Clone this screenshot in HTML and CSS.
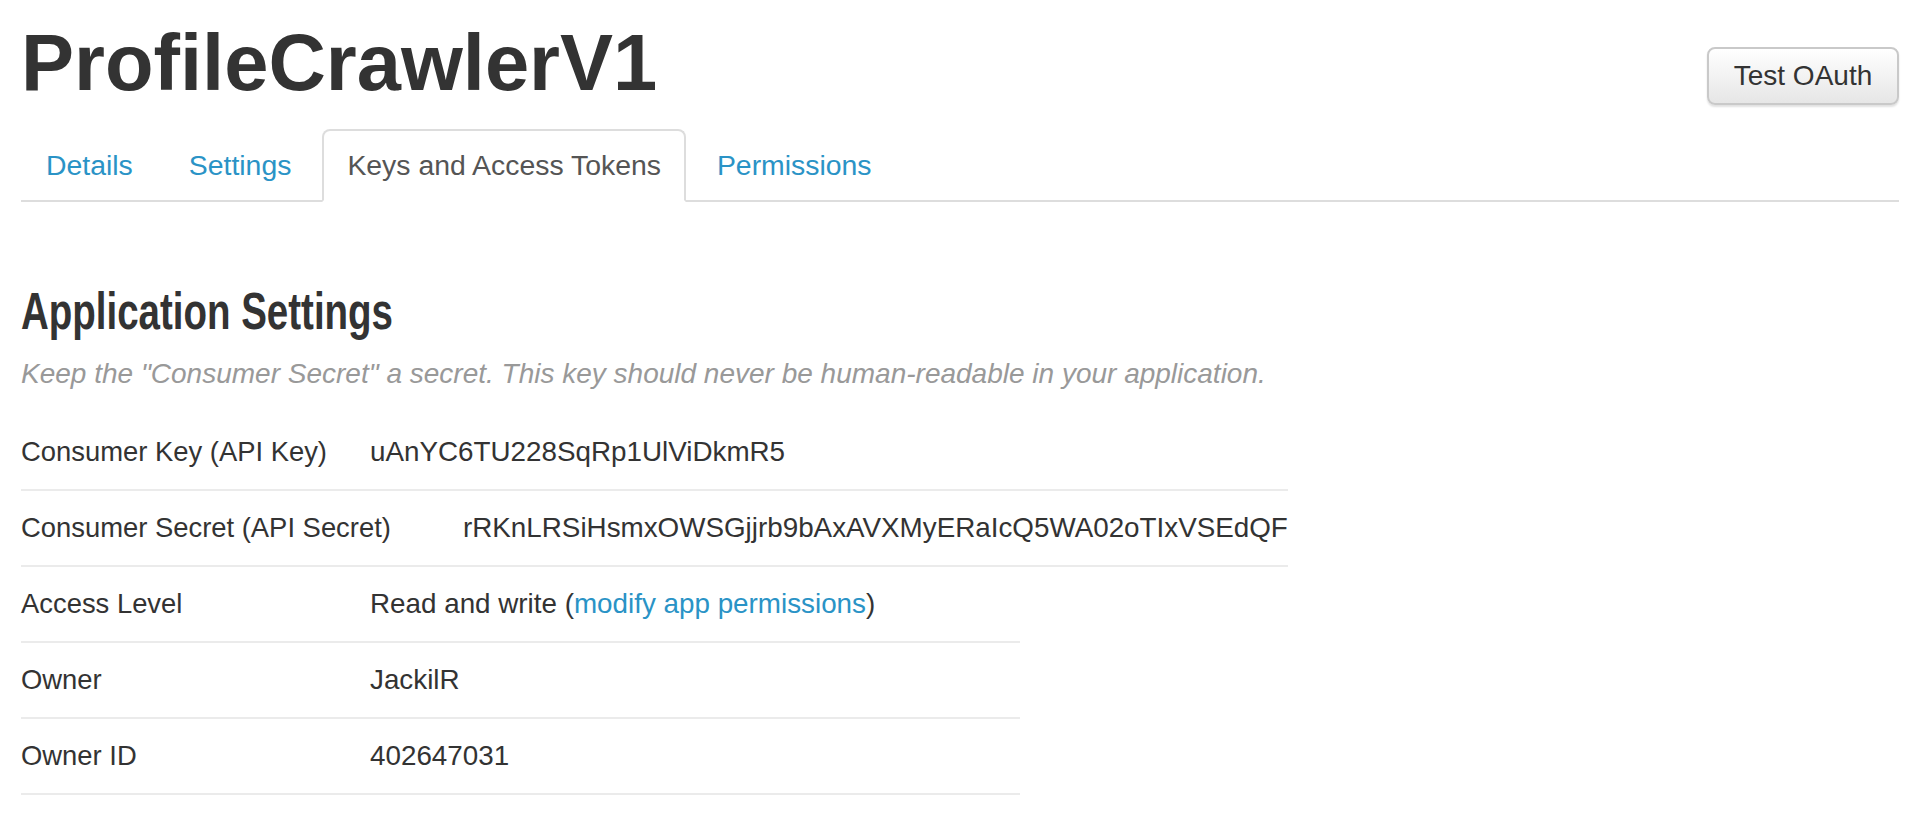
FILE: index.html
```html
<!DOCTYPE html>
<html lang="en">
<head>
<meta charset="utf-8">
<title>ProfileCrawlerV1</title>
<link rel="stylesheet" href="styles.css">
</head>
<body>
<div class="page">
  <header class="app-header">
    <h1 class="app-title">ProfileCrawlerV1</h1>
    <button class="btn" type="button">Test OAuth</button>
  </header>

  <ul class="tabs">
    <li class="tab"><a class="tab-link" href="#">Details</a></li>
    <li class="tab"><a class="tab-link" href="#">Settings</a></li>
    <li class="tab tab-active"><a class="tab-link" href="#">Keys and Access Tokens</a></li>
    <li class="tab"><a class="tab-link" href="#">Permissions</a></li>
  </ul>

  <section class="settings">
    <h2 class="section-title"><span class="section-title-text">Application Settings</span></h2>
    <p class="hint">Keep the "Consumer Secret" a secret. This key should never be human-readable in your application.</p>

    <div class="rows rows-keys">
      <div class="row row-key">
        <span class="row-label">Consumer Key (API Key)</span>
        <span class="row-value">uAnYC6TU228SqRp1UlViDkmR5</span>
      </div>
      <div class="row row-secret">
        <span class="row-label">Consumer Secret (API Secret)</span>
        <span class="row-value">rRKnLRSiHsmxOWSGjjrb9bAxAVXMyERaIcQ5WA02oTIxVSEdQF</span>
      </div>
    </div>

    <div class="rows rows-info">
      <div class="row">
        <span class="row-label">Access Level</span>
        <span class="row-value">Read and write (<a class="link" href="#">modify app permissions</a>)</span>
      </div>
      <div class="row">
        <span class="row-label">Owner</span>
        <span class="row-value">JackilR</span>
      </div>
      <div class="row">
        <span class="row-label">Owner ID</span>
        <span class="row-value">402647031</span>
      </div>
    </div>
  </section>
</div>
</body>
</html>
```

FILE: styles.css
```css
html, body {
  margin: 0;
  padding: 0;
  background: #ffffff;
}

body {
  font-family: "Liberation Sans", Arial, Helvetica, sans-serif;
  color: #333333;
  font-size: 28px;
}

.page {
  padding: 17px 21px 0 21px;
}

.app-header {
  display: flex;
  justify-content: space-between;
  align-items: flex-start;
}

.app-title {
  margin: 0;
  font-family: "Liberation Sans", Arial, sans-serif;
  font-weight: 700;
  font-size: 79.5px;
  line-height: 91px;
  color: #333333;
}

.btn {
  margin-top: 30px;
  width: 192px;
  height: 58px;
  padding: 0;
  font-family: "Liberation Sans", Arial, sans-serif;
  font-size: 28px;
  color: #333333;
  background: linear-gradient(#ffffff, #e6e6e6);
  border: 2px solid #c9c9c9;
  border-radius: 8px;
  box-shadow: 0 2px 2px rgba(0, 0, 0, 0.12);
}

.tabs {
  list-style: none;
  margin: 21px 0 0 0;
  padding: 0;
  display: flex;
  border-bottom: 2px solid #dddddd;
}

.tab {
  margin: 0 6px -2px 0;
}

.tab-link {
  display: block;
  padding: 16px 23px;
  line-height: 37px;
  font-size: 28.4px;
  color: #2a93c6;
  text-decoration: none;
  border: 2px solid transparent;
  border-radius: 8px 8px 0 0;
}

.tab-active .tab-link {
  color: #555555;
  background: #ffffff;
  border-color: #dddddd #dddddd #ffffff;
}

.settings {
  padding-top: 78px;
}

.section-title {
  margin: 0;
  font-family: "Liberation Sans", Arial, sans-serif;
  font-weight: 700;
  font-size: 52px;
  line-height: 62px;
  color: #333333;
}

.section-title-text {
  display: inline-block;
  transform: scaleX(0.74);
  transform-origin: left center;
  white-space: nowrap;
}

.hint {
  margin: 14px 0 0 0;
  font-style: italic;
  font-size: 28px;
  line-height: 36px;
  color: #999999;
}

.rows-keys {
  margin-top: 23px;
  width: fit-content;
}

.rows-info {
  width: 999px;
}

.row {
  display: flex;
  align-items: baseline;
  padding: 18px 0;
  line-height: 38px;
  border-bottom: 2px solid #ebebeb;
  white-space: nowrap;
}

.row-label {
  flex: 0 0 auto;
  width: 349px;
  font-size: 27.4px;
}

.row-secret .row-label {
  width: 442px;
}

.row-value {
  flex: 0 0 auto;
  font-size: 27.8px;
}

.link {
  color: #2a93c6;
  text-decoration: none;
}
```
